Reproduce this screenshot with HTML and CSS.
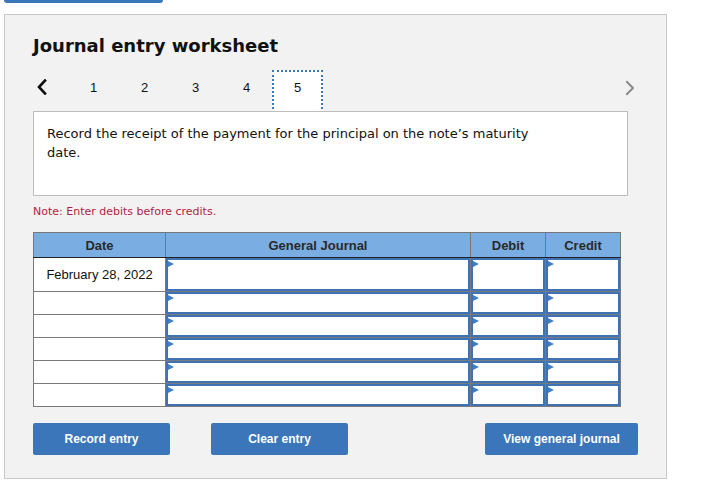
FILE: index.html
```html
<!DOCTYPE html>
<html>
<head>
<meta charset="utf-8">
<link rel="stylesheet" href="styles.css">
</head>
<body>
<div class="topbar"></div>
<div class="panel">
  <h1 class="title">Journal entry worksheet</h1>
  <div class="nav">
    <span class="chev chev-left"><svg width="12" height="16" viewBox="0 0 12 16"><path d="M9 1.5 L3 8 L9 14.5" fill="none" stroke="#111" stroke-width="2.6" stroke-linecap="square"/></svg></span>
    <div class="tabs">
      <span class="tab">1</span>
      <span class="tab">2</span>
      <span class="tab">3</span>
      <span class="tab">4</span>
      <span class="tab active">5</span>
    </div>
    <span class="chev chev-right"><svg width="12" height="16" viewBox="0 0 12 16"><path d="M3 2 L9 8 L3 14" fill="none" stroke="#8a8a8a" stroke-width="2" stroke-linecap="square"/></svg></span>
  </div>
  <div class="prompt"><p>Record the receipt of the payment for the principal on the note’s maturity date.</p></div>
  <div class="note">Note: Enter debits before credits.</div>
  <table class="journal">
    <thead>
      <tr><th class="c-date">Date</th><th class="c-gj">General Journal</th><th class="c-num">Debit</th><th class="c-num">Credit</th></tr>
    </thead>
    <tbody>
      <tr class="first"><td class="date">February 28, 2022</td><td><div class="inp"></div></td><td><div class="inp"></div></td><td><div class="inp"></div></td></tr>
      <tr><td class="date"></td><td><div class="inp"></div></td><td><div class="inp"></div></td><td><div class="inp"></div></td></tr>
      <tr><td class="date"></td><td><div class="inp"></div></td><td><div class="inp"></div></td><td><div class="inp"></div></td></tr>
      <tr><td class="date"></td><td><div class="inp"></div></td><td><div class="inp"></div></td><td><div class="inp"></div></td></tr>
      <tr><td class="date"></td><td><div class="inp"></div></td><td><div class="inp"></div></td><td><div class="inp"></div></td></tr>
      <tr><td class="date"></td><td><div class="inp"></div></td><td><div class="inp"></div></td><td><div class="inp"></div></td></tr>
    </tbody>
  </table>
  <div class="buttons">
    <button class="btn">Record entry</button>
    <button class="btn btn-clear">Clear entry</button>
    <button class="btn btn-view">View general journal</button>
  </div>
</div>
</body>
</html>
```
FILE: styles.css
```css
html, body {
  margin: 0;
  padding: 0;
  background: #ffffff;
}
body {
  font-family: "DejaVu Sans", Verdana, sans-serif;
  color: #111;
}
.topbar {
  margin-left: 4px;
  width: 159px;
  height: 3px;
  background: #3a76b9;
  border-radius: 0 0 3px 3px;
}
.panel {
  box-sizing: border-box;
  margin: 11px 0 0 4px;
  width: 663px;
  height: 465px;
  background: #f2f2f2;
  border: 1px solid #c8c8c8;
  padding: 20px 28px 0 28px;
  display: flex;
  flex-direction: column;
}
.title {
  margin: 0;
  font-size: 18px;
  line-height: 22px;
  font-weight: bold;
  color: #111;
}
.nav {
  margin-top: 13px;
  height: 41px;
  display: flex;
  align-items: flex-start;
}
.chev {
  display: flex;
  align-items: center;
}
.chev-left {
  margin-left: 3px;
  margin-top: 9px;
}
.tabs {
  display: flex;
  margin-left: 20px;
  height: 41px;
}
.tab {
  box-sizing: border-box;
  width: 51px;
  height: 41px;
  display: flex;
  justify-content: center;
  font-family: "Liberation Sans", Arial, sans-serif;
  font-size: 13px;
  line-height: 15px;
  color: #111;
  padding-top: 10px;
}
.tab.active {
  background: #fff;
  border: 2px dotted #3a76b9;
  height: 43px;
  padding-top: 8px;
}
.chev-right {
  margin-left: auto;
  margin-right: 2px;
  margin-top: 10px;
}
.prompt {
  box-sizing: border-box;
  width: 595px;
  height: 85px;
  background: #fff;
  border: 1px solid #bdbdbd;
  padding: 12px 13px 0 13px;
}
.prompt p {
  margin: 0;
  width: 505px;
  font-size: 13px;
  line-height: 19px;
  color: #111;
}
.note {
  margin-top: 9px;
  font-size: 11px;
  line-height: 14px;
  color: #b11f3d;
}
.journal {
  margin-top: 13px;
  width: 587px;
  border-collapse: collapse;
  table-layout: fixed;
  background: #fff;
}
.journal th {
  height: 24px;
  padding: 0;
  background: #7aaee3;
  border: 1px solid #777;
  border-bottom: 1px solid #222;
  font-family: "Liberation Sans", Arial, sans-serif;
  font-size: 13px;
  font-weight: bold;
  color: #2a2a2a;
  text-align: center;
}
.journal th + th {
  border-left: 1px solid #222;
}
.c-date { width: 131px; }
.c-gj { width: 304px; }
.c-num { width: 74px; }
.journal td {
  padding: 0;
  height: 22px;
  border: 1px solid #7a7a7a;
  vertical-align: top;
}
.journal tr.first td {
  height: 33px;
}
.journal td.date {
  font-family: "Liberation Sans", Arial, sans-serif;
  font-size: 13px;
  text-align: center;
  vertical-align: middle;
  color: #111;
}
.inp {
  box-sizing: border-box;
  position: relative;
  height: 100%;
  min-height: 22px;
  border: 2px solid #3d72b4;
  background: #fff;
}
tr.first .inp {
  min-height: 33px;
}
.inp::before {
  content: "";
  position: absolute;
  left: 0;
  top: 1px;
  border-left: 6px solid #3d7fc9;
  border-top: 3px solid transparent;
  border-bottom: 3px solid transparent;
}
.buttons {
  margin-top: 16px;
  display: flex;
}
.btn {
  box-sizing: border-box;
  width: 137px;
  height: 32px;
  border: none;
  border-radius: 2px;
  background: #3a76b9;
  color: #fff;
  font-family: "Liberation Sans", Arial, sans-serif;
  font-size: 12px;
  font-weight: bold;
  padding: 0;
}
.btn-clear {
  margin-left: 41px;
}
.btn-view {
  margin-left: auto;
  width: 153px;
}
```
